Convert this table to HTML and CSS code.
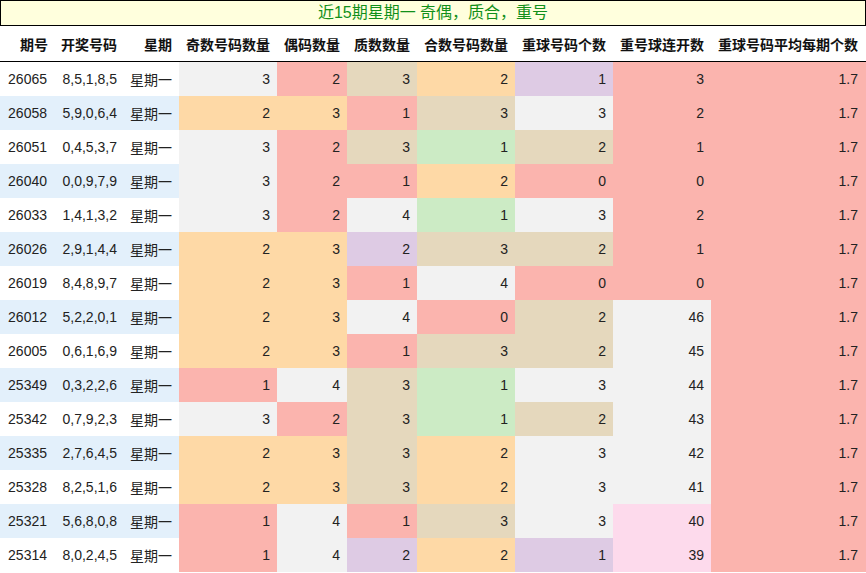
FILE: index.html
```html
<!DOCTYPE html>
<html>
<head>
<meta charset="utf-8">
<link rel="stylesheet" href="styles.css">
</head>
<body>
<div class="title">近15期星期一 奇偶，质合，重号</div>
<table class="grid">
<colgroup>
<col class="w54"><col class="w70"><col class="w55"><col class="w98"><col class="w70"><col class="w70"><col class="w98"><col class="w98"><col class="w98"><col class="w155">
</colgroup>
<thead>
<tr><th>期号</th><th>开奖号码</th><th>星期</th><th>奇数号码数量</th><th>偶码数量</th><th>质数数量</th><th>合数号码数量</th><th>重球号码个数</th><th>重号球连开数</th><th>重球号码平均每期个数</th></tr>
</thead>
<tbody>
<tr><td>26065</td><td>8,5,1,8,5</td><td>星期一</td><td class="g">3</td><td class="r">2</td><td class="t">3</td><td class="o">2</td><td class="p">1</td><td class="r">3</td><td class="r">1.7</td></tr>
<tr class="alt"><td>26058</td><td>5,9,0,6,4</td><td>星期一</td><td class="o">2</td><td class="o">3</td><td class="r">1</td><td class="t">3</td><td class="g">3</td><td class="r">2</td><td class="r">1.7</td></tr>
<tr><td>26051</td><td>0,4,5,3,7</td><td>星期一</td><td class="g">3</td><td class="r">2</td><td class="t">3</td><td class="gr">1</td><td class="t">2</td><td class="r">1</td><td class="r">1.7</td></tr>
<tr class="alt"><td>26040</td><td>0,0,9,7,9</td><td>星期一</td><td class="g">3</td><td class="r">2</td><td class="r">1</td><td class="o">2</td><td class="r">0</td><td class="r">0</td><td class="r">1.7</td></tr>
<tr><td>26033</td><td>1,4,1,3,2</td><td>星期一</td><td class="g">3</td><td class="r">2</td><td class="g">4</td><td class="gr">1</td><td class="g">3</td><td class="r">2</td><td class="r">1.7</td></tr>
<tr class="alt"><td>26026</td><td>2,9,1,4,4</td><td>星期一</td><td class="o">2</td><td class="o">3</td><td class="p">2</td><td class="t">3</td><td class="t">2</td><td class="r">1</td><td class="r">1.7</td></tr>
<tr><td>26019</td><td>8,4,8,9,7</td><td>星期一</td><td class="o">2</td><td class="o">3</td><td class="r">1</td><td class="g">4</td><td class="r">0</td><td class="r">0</td><td class="r">1.7</td></tr>
<tr class="alt"><td>26012</td><td>5,2,2,0,1</td><td>星期一</td><td class="o">2</td><td class="o">3</td><td class="g">4</td><td class="r">0</td><td class="t">2</td><td class="g">46</td><td class="r">1.7</td></tr>
<tr><td>26005</td><td>0,6,1,6,9</td><td>星期一</td><td class="o">2</td><td class="o">3</td><td class="r">1</td><td class="t">3</td><td class="t">2</td><td class="g">45</td><td class="r">1.7</td></tr>
<tr class="alt"><td>25349</td><td>0,3,2,2,6</td><td>星期一</td><td class="r">1</td><td class="g">4</td><td class="t">3</td><td class="gr">1</td><td class="g">3</td><td class="g">44</td><td class="r">1.7</td></tr>
<tr><td>25342</td><td>0,7,9,2,3</td><td>星期一</td><td class="g">3</td><td class="r">2</td><td class="t">3</td><td class="gr">1</td><td class="t">2</td><td class="g">43</td><td class="r">1.7</td></tr>
<tr class="alt"><td>25335</td><td>2,7,6,4,5</td><td>星期一</td><td class="o">2</td><td class="o">3</td><td class="t">3</td><td class="o">2</td><td class="g">3</td><td class="g">42</td><td class="r">1.7</td></tr>
<tr><td>25328</td><td>8,2,5,1,6</td><td>星期一</td><td class="o">2</td><td class="o">3</td><td class="t">3</td><td class="o">2</td><td class="g">3</td><td class="g">41</td><td class="r">1.7</td></tr>
<tr class="alt"><td>25321</td><td>5,6,8,0,8</td><td>星期一</td><td class="r">1</td><td class="g">4</td><td class="r">1</td><td class="t">3</td><td class="g">3</td><td class="k">40</td><td class="r">1.7</td></tr>
<tr><td>25314</td><td>8,0,2,4,5</td><td>星期一</td><td class="r">1</td><td class="g">4</td><td class="p">2</td><td class="o">2</td><td class="p">1</td><td class="k">39</td><td class="r">1.7</td></tr>
</tbody>
</table>
</body>
</html>
```
FILE: styles.css
```css
html, body {
  margin: 0;
  padding: 0;
  background: #ffffff;
}
body {
  width: 866px;
  font-family: "Liberation Sans", Arial, "Noto Sans CJK SC", sans-serif;
  font-size: 14px;
  color: #222222;
}
.title {
  box-sizing: border-box;
  height: 26px;
  border: 1px solid #000000;
  background: #ffffdd;
  color: #11901a;
  font-size: 16px;
  line-height: 24px;
  text-align: center;
}
.grid {
  width: 866px;
  table-layout: fixed;
  border-collapse: collapse;
  border-spacing: 0;
}
.w54 { width: 54px; }
.w55 { width: 55px; }
.w70 { width: 70px; }
.w98 { width: 98px; }
.w155 { width: 155px; }
.grid th {
  height: 35px;
  padding: 0 7px 0 0;
  text-align: right;
  font-weight: bold;
  color: #111111;
  border-bottom: 1px solid #000000;
  white-space: nowrap;
  overflow: hidden;
}
.grid td {
  height: 34px;
  padding: 0 7px 0 0;
  text-align: right;
  white-space: nowrap;
  overflow: hidden;
}
.grid th:first-child { padding-right: 6px; }
.grid td:last-child, .grid th:last-child { padding-right: 8px; }
.alt td { background: #e3f0fb; }
.grid td.g { background: #f2f2f2; }
.grid td.r { background: #fbb4ae; }
.grid td.t { background: #e5d8bd; }
.grid td.o { background: #fed9a6; }
.grid td.p { background: #decbe4; }
.grid td.gr { background: #ccebc5; }
.grid td.k { background: #fddaec; }
```
